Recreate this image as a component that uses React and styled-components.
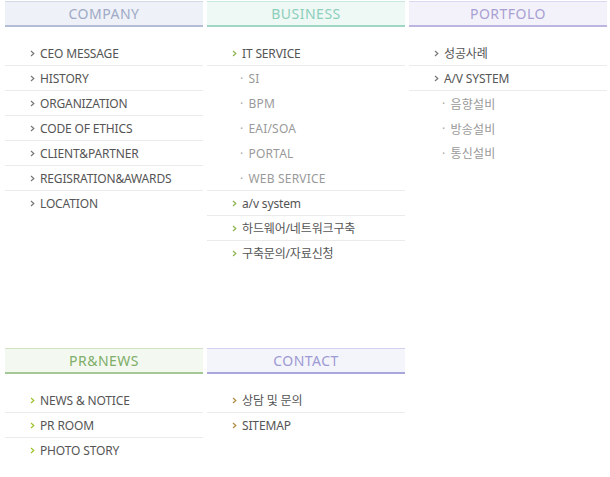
import React from 'react';
import styled, {createGlobalStyle} from 'styled-components';

const sections = [
    {
        title: 'COMPANY', bg: '#eef1f7', line: '#b3bdd6', lineTop: '#d3d9e8', color: '#9eaac6', arrow: '#777',
        items: [
            {label: 'CEO MESSAGE'}, {label: 'HISTORY'}, {label: 'ORGANIZATION'}, {label: 'CODE OF ETHICS'},
            {label: 'CLIENT&PARTNER'}, {label: 'REGISRATION&AWARDS'}, {label: 'LOCATION'},
        ],
    },
    {
        title: 'BUSINESS', bg: '#eef8f5', line: '#9fd6c4', lineTop: '#c9e9de', color: '#8ccfba', arrow: '#8cb44e',
        items: [
            {label: 'IT SERVICE', subs: ['SI', 'BPM', 'EAI/SOA', 'PORTAL', 'WEB SERVICE']},
            {label: 'a/v system'}, {label: '하드웨어/네트워크구축'}, {label: '구축문의/자료신청'},
        ],
    },
    {
        title: 'PORTFOLO', bg: '#f3f2fa', line: '#bcb5e0', lineTop: '#dcd8ef', color: '#a9a0d2', arrow: '#777',
        items: [
            {label: '성공사례'},
            {label: 'A/V SYSTEM', subs: ['음향설비', '방송설비', '통신설비']},
        ],
    },
    {
        title: 'PR&NEWS', bg: '#f3f8f0', line: '#a6c796', lineTop: '#cfe2c6', color: '#7eae69', arrow: '#9cc22c',
        items: [{label: 'NEWS & NOTICE'}, {label: 'PR ROOM'}, {label: 'PHOTO STORY'}],
    },
    {
        title: 'CONTACT', bg: '#f4f4fb', line: '#a9a6d9', lineTop: '#d2d0ee', color: '#9d9ad4', arrow: '#b08a3e',
        items: [{label: '상담 및 문의'}, {label: 'SITEMAP'}],
    },
];

const Arrow = ({color}) => (
    <ArrowIcon width="5" height="7" viewBox="0 0 5 7">
        <polyline points="1,1 3.8,3.5 1,6" fill="none" stroke={color} strokeWidth="1.2"/>
    </ArrowIcon>
);

const App = () => {
    return (
        <>
            <GlobalStyle/>
            <Page>
                {sections.map(section => (
                    <Section key={section.title}>
                        <Header $bg={section.bg} $line={section.line} $lineTop={section.lineTop} $color={section.color}>
                            {section.title}
                        </Header>
                        <Menu>
                            {section.items.map(item => (
                                <MenuItem key={item.label}>
                                    <ItemRow>
                                        <Arrow color={section.arrow}/>
                                        {item.label}
                                    </ItemRow>
                                    {item.subs && (
                                        <SubMenu>
                                            {item.subs.map(sub => (
                                                <SubRow key={sub}>
                                                    <Dot>·</Dot>
                                                    {sub}
                                                </SubRow>
                                            ))}
                                        </SubMenu>
                                    )}
                                </MenuItem>
                            ))}
                        </Menu>
                    </Section>
                ))}
            </Page>
        </>
    )
}

const GlobalStyle = createGlobalStyle`
  body {
    margin: 0;
    background: #fff;
    font-family: "Noto Sans", "Noto Sans CJK KR", sans-serif;
  }
`;

const Page = styled.div`
  display: grid;
  grid-template-columns: repeat(3, 198px);
  grid-template-rows: 343px auto;
  column-gap: 4px;
  row-gap: 4px;
  padding: 1px 0 0 5px;
`;

const Section = styled.div``;

const Header = styled.div`
  height: 23px;
  line-height: 23px;
  text-align: center;
  font-size: 14px;
  letter-spacing: 0.5px;
  color: ${p => p.$color};
  background: ${p => p.$bg};
  border-top: 1px solid ${p => p.$lineTop};
  border-bottom: 2px solid ${p => p.$line};
`;

const Menu = styled.ul`
  list-style: none;
  margin: 14px 0 0;
  padding: 0;
`;

const MenuItem = styled.li`
  border-bottom: 1px solid #ebebeb;

  &:last-child {
    border-bottom: none;
  }
`;

const ItemRow = styled.div`
  display: flex;
  align-items: center;
  height: 24px;
  padding-left: 25px;
  font-size: 12px;
  color: #555;
  letter-spacing: -0.15px;
`;

const ArrowIcon = styled.svg`
  margin-right: 5px;
  flex-shrink: 0;
`;

const SubMenu = styled.ul`
  list-style: none;
  margin: 0;
  padding: 0;
  border-top: 1px solid #ebebeb;
`;

const SubRow = styled.li`
  display: flex;
  align-items: center;
  height: 25px;
  padding-left: 33px;
  font-size: 12px;
  color: #9a9a9a;
  letter-spacing: 0.2px;

  &:last-child {
    height: 24px;
  }
`;

const Dot = styled.span`
  margin-right: 5px;
  color: #aaa;
`;

export default App;
